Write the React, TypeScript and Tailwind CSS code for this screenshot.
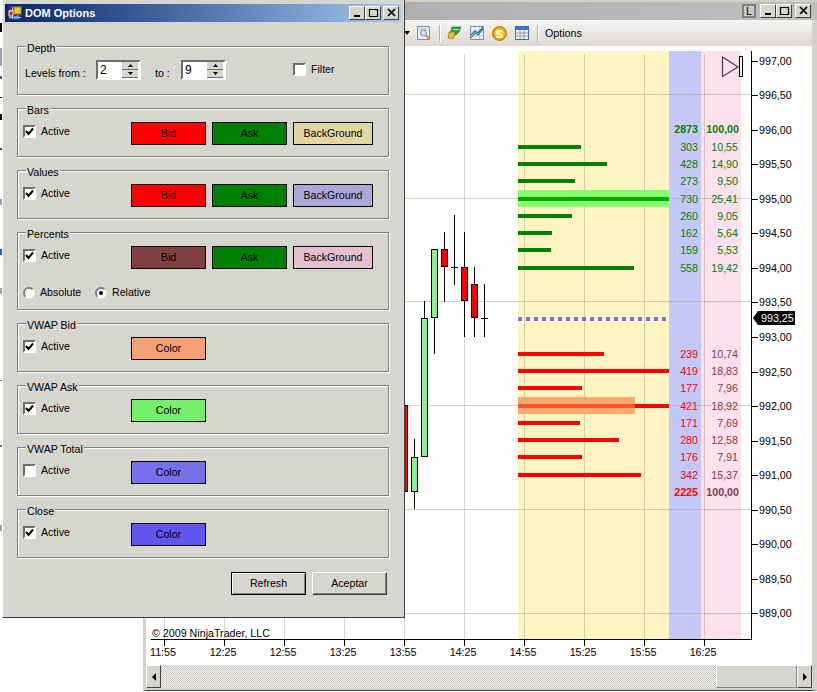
import type { ReactNode } from "react"

const askRows = [
  { y: 147, end: 581, value: "303", pct: "10,55" },
  { y: 164, end: 607, value: "428", pct: "14,90" },
  { y: 181, end: 575, value: "273", pct: "9,50" },
  { y: 199, end: 669, value: "730", pct: "25,41" },
  { y: 216, end: 572, value: "260", pct: "9,05" },
  { y: 233, end: 552, value: "162", pct: "5,64" },
  { y: 250, end: 551, value: "159", pct: "5,53" },
  { y: 268, end: 634, value: "558", pct: "19,42" },
]

const bidRows = [
  { y: 354, end: 604, value: "239", pct: "10,74" },
  { y: 371, end: 669, value: "419", pct: "18,83" },
  { y: 388, end: 582, value: "177", pct: "7,96" },
  { y: 406, end: 669, value: "421", pct: "18,92" },
  { y: 423, end: 580, value: "171", pct: "7,69" },
  { y: 440, end: 619, value: "280", pct: "12,58" },
  { y: 457, end: 582, value: "176", pct: "7,91" },
  { y: 475, end: 641, value: "342", pct: "15,37" },
]

const priceLabels = [
  { y: 61, text: "997,00" },
  { y: 95, text: "996,50" },
  { y: 130, text: "996,00" },
  { y: 164, text: "995,50" },
  { y: 199, text: "995,00" },
  { y: 233, text: "994,50" },
  { y: 268, text: "994,00" },
  { y: 302, text: "993,50" },
  { y: 337, text: "993,00" },
  { y: 372, text: "992,50" },
  { y: 406, text: "992,00" },
  { y: 441, text: "991,50" },
  { y: 475, text: "991,00" },
  { y: 510, text: "990,50" },
  { y: 544, text: "990,00" },
  { y: 579, text: "989,50" },
  { y: 613, text: "989,00" },
]

const timeLabels = [
  { x: 164, text: "11:55" },
  { x: 224, text: "12:25" },
  { x: 284, text: "12:55" },
  { x: 344, text: "13:25" },
  { x: 404, text: "13:55" },
  { x: 464, text: "14:25" },
  { x: 524, text: "14:55" },
  { x: 584, text: "15:25" },
  { x: 644, text: "15:55" },
  { x: 704, text: "16:25" },
]

const gridY = [95, 199, 302, 406, 510, 614]

const candles = [
  { x: 404, top: 405, bottom: 492, wickTop: 405, wickBottom: 492, fill: "#ff0000" },
  { x: 414, top: 457, bottom: 492, wickTop: 439, wickBottom: 509, fill: "#90ee90" },
  { x: 424, top: 318, bottom: 457, wickTop: 301, wickBottom: 457, fill: "#90ee90" },
  { x: 434, top: 249, bottom: 318, wickTop: 249, wickBottom: 354, fill: "#90ee90" },
  { x: 444, top: 249, bottom: 267, wickTop: 232, wickBottom: 302, fill: "#ff0000" },
  { x: 464, top: 267, bottom: 301, wickTop: 232, wickBottom: 337, fill: "#ff0000" },
  { x: 474, top: 284, bottom: 318, wickTop: 267, wickBottom: 337, fill: "#ff0000" },
]

const dojis = [
  { x: 454, mid: 267, top: 215, bottom: 285 },
  { x: 484, mid: 318, top: 284, bottom: 337 },
]

const behindDashes = [
  { top: 23, h: 9, color: "bg-black" },
  { top: 48, h: 18, color: "bg-gray-400" },
  { top: 76, h: 3, color: "bg-gray-600" },
  { top: 97, h: 1, color: "bg-black" },
  { top: 114, h: 6, color: "bg-black" },
  { top: 148, h: 2, color: "bg-gray-700" },
  { top: 199, h: 6, color: "bg-gray-400" },
  { top: 249, h: 6, color: "bg-blue-600" },
  { top: 288, h: 6, color: "bg-gray-400" },
  { top: 380, h: 1, color: "bg-gray-500" },
  { top: 445, h: 2, color: "bg-gray-500" },
  { top: 525, h: 6, color: "bg-gray-400" },
]

function Checkbox({ checked }: { checked?: boolean }) {
  return (
    <span className="w-[13px] h-[13px] shrink-0 bg-white border-2 border-t-[#6e6e6e] border-l-[#6e6e6e] border-r-white border-b-white flex items-center justify-center">
      {checked && (
        <svg width="9" height="9" viewBox="0 0 9 9">
          <path d="M1 4 L3.5 7 L8 1.5" fill="none" stroke="#000" strokeWidth="2" />
        </svg>
      )}
    </span>
  )
}

function Radio({ checked }: { checked?: boolean }) {
  return (
    <span className="w-3 h-3 shrink-0 rounded-full bg-white border-2 border-t-[#808080] border-l-[#808080] border-r-[#efefef] border-b-[#efefef] flex items-center justify-center">
      {checked && <span className="w-1 h-1 rounded-full bg-black" />}
    </span>
  )
}

function ColorButton({ label, color, wide }: { label: string; color: string; wide?: boolean }) {
  return (
    <div className={`${wide ? "w-[80px]" : "w-[75px]"} h-[23px] border border-black flex items-center justify-center pt-px ${color}`}>
      {label}
    </div>
  )
}

function Group({ title, className, children }: { title: string; className: string; children: ReactNode }) {
  return (
    <div className={`relative border border-[#808080] shadow-[1px_1px_0_#fff,inset_1px_1px_0_#fff] ${className}`}>
      <span className="absolute left-[8px] top-[-5px] px-px bg-[#d6d5ce] leading-[13px]">{title}</span>
      {children}
    </div>
  )
}

function ActiveRow({ checked, children }: { checked?: boolean; children: ReactNode }) {
  return (
    <div className="flex items-start pl-[5px] pt-[13px]">
      <div className="w-[108px] flex items-center gap-[5px] mt-[3px] leading-[13px]">
        <Checkbox checked={checked} />
        Active
      </div>
      <div className="flex gap-[6px]">{children}</div>
    </div>
  )
}

function Spinner({ value }: { value: number }) {
  return (
    <div className="w-[45px] h-[20px] bg-white border-2 border-t-[#6e6e6e] border-l-[#6e6e6e] border-r-white border-b-white flex items-center justify-between text-[12px]">
      <span className="pl-[2px]">{value}</span>
      <div className="w-[16px] h-full flex flex-col mr-[1px]">
        <div className="flex-1 bg-[#d6d5ce] border-b border-[#6e6e6e] flex items-center justify-center">
          <svg width="5" height="3" viewBox="0 0 5 3">
            <path d="M2.5 0 L5 3 H0 Z" fill="#000" />
          </svg>
        </div>
        <div className="flex-1 bg-[#d6d5ce] border-b border-[#6e6e6e] flex items-center justify-center">
          <svg width="5" height="3" viewBox="0 0 5 3">
            <path d="M0 0 H5 L2.5 3 Z" fill="#000" />
          </svg>
        </div>
      </div>
    </div>
  )
}

function WinButton({ kind, className }: { kind: "min" | "max" | "close"; className: string }) {
  return (
    <div className={`h-[14px] bg-[#d6d5ce] border border-t-white border-l-white border-r-[#404040] border-b-[#404040] flex items-center justify-center ${className}`}>
      <svg width="11" height="10" viewBox="0 0 11 10">
        {kind === "min" && <rect x="2" y="7" width="6" height="2" fill="#000" />}
        {kind === "max" && <path d="M1.5 1.5 H9.5 V8.5 H1.5 Z M1 1.5 H10" fill="none" stroke="#000" strokeWidth="1.2" />}
        {kind === "close" && <path d="M2 1 L9 8 M9 1 L2 8" fill="none" stroke="#000" strokeWidth="1.7" />}
      </svg>
    </div>
  )
}

function DialogIcon() {
  return (
    <svg width="14" height="14" viewBox="0 0 14 14" className="shrink-0">
      <rect width="14" height="14" fill="#1c3a78" />
      <path d="M1 4.5 H13 M1 11.5 H13 M4.5 1 V13 M10 9 V13" stroke="#b8c4dc" />
      <rect x="6" y="1" width="7" height="7" fill="#f4c430" stroke="#a87808" />
      <rect x="1" y="5" width="4" height="5" fill="#d82020" stroke="#e8e8e8" />
      <rect x="6" y="10" width="4" height="3" fill="#58a0e8" />
    </svg>
  )
}

function ToolbarIcons() {
  return (
    <>
      <svg width="14" height="15" viewBox="0 0 14 15" className="ml-[7px] shrink-0">
        <rect x="0.5" y="0.5" width="12" height="13" fill="#eaf0fa" stroke="#6f93c8" />
        <path d="M2 3 H11" stroke="#9db7dc" />
        <circle cx="6.5" cy="7" r="3" fill="#cfe2f6" stroke="#7a8aa0" />
        <path d="M9 9.5 L13 13.5" stroke="#e08a30" strokeWidth="2" />
      </svg>
      <div className="w-px h-[17px] bg-[#b4b0a8] ml-[8px] shadow-[1px_0_0_#fff]" />
      <svg width="15" height="14" viewBox="0 0 15 14" className="ml-[7px] shrink-0">
        <path d="M5 1 H14 L12 6 L9 9 H3 Z" fill="#2fa043" stroke="#146a24" strokeWidth="0.6" />
        <path d="M2 6 H8 L7 12 Q4 14 1 12 Z" fill="#eab82a" stroke="#8d6a10" strokeWidth="0.6" />
        <path d="M6 3.5 H12" stroke="#a8eab4" />
      </svg>
      <svg width="14" height="14" viewBox="0 0 14 14" className="ml-[8px] shrink-0">
        <rect x="0.5" y="0.5" width="13" height="13" fill="#f2f2fb" stroke="#8a8ab0" />
        <path d="M5 1 V13 M9.5 1 V13 M1 5 H13 M1 9.5 H13" stroke="#c8c8e0" />
        <path d="M1 12 L5 7 L8 9 L13 3" fill="none" stroke="#1f9e4a" strokeWidth="1.2" />
        <path d="M1 9 L5 5 L8 7 L13 1" fill="none" stroke="#2a62c8" strokeWidth="1.2" />
      </svg>
      <svg width="15" height="15" viewBox="0 0 15 15" className="ml-[8px] shrink-0">
        <circle cx="7.5" cy="7.5" r="7" fill="#e3a008" stroke="#b87f08" />
        <circle cx="7.5" cy="7.5" r="5" fill="#f8c82c" />
        <text x="7.5" y="11.5" textAnchor="middle" fontSize="11" fontWeight="700" fill="#fff">
          S
        </text>
      </svg>
      <svg width="14" height="14" viewBox="0 0 14 14" className="ml-[8px] shrink-0">
        <rect x="0.5" y="0.5" width="13" height="13" fill="#f6f3e2" stroke="#3b6cb0" />
        <rect x="1" y="1" width="12" height="3" fill="#3b78c8" />
        <path d="M1 7 H13 M1 10 H13 M5 4 V13 M9 4 V13" stroke="#8aa0c0" />
      </svg>
      <div className="w-px h-[17px] bg-[#b4b0a8] ml-[8px] shadow-[1px_0_0_#fff]" />
      <span className="ml-[7px]">Options</span>
    </>
  )
}

function ChartCanvas() {
  const dots = Array.from({ length: 19 }, (_, i) => 518 + i * 8)

  return (
    <svg width="666" height="619" viewBox="146 46 666 619" className="block shrink-0 bg-white">
      <rect x="518" y="51" width="151" height="588" fill="#fff5c3" />
      <rect x="669" y="51" width="32" height="588" fill="#c4c8f8" />
      <rect x="701" y="51" width="40" height="588" fill="#fddfee" />

      {timeLabels.map((t) => (
        <path key={t.x} d={`M${t.x + 0.5} 54 V639`} stroke="#a09880" strokeOpacity="0.42" />
      ))}
      {gridY.map((y) => (
        <path key={y} d={`M146 ${y - 0.5} H751`} stroke="#a09880" strokeOpacity="0.42" />
      ))}

      <rect x="518" y="190" width="151" height="17" fill="#87ff6e" />
      <rect x="518" y="397" width="117" height="17" fill="#ffa96b" />

      {askRows.map((r) => (
        <rect
          key={r.y}
          x="518"
          y={r.y - 2}
          width={r.end - 518}
          height="4"
          fill={r.value === "730" ? "#00a800" : "#008000"}
        />
      ))}
      {bidRows.map((r) => (
        <rect key={r.y} x="518" y={r.y - 2} width={r.end - 518} height="4" fill="#ff0000" />
      ))}
      <rect x="518" y="404" width="117" height="4" fill="#ff5030" />
      {dots.map((x) => (
        <rect key={x} x={x} y="317" width="4" height="4" fill="#7b72e6" />
      ))}

      {candles.map((c) => (
        <g key={c.x}>
          <path d={`M${c.x + 0.5} ${c.wickTop} V${c.wickBottom}`} stroke="#000" />
          <rect x={c.x - 2.5} y={c.top + 0.5} width="6" height={c.bottom - c.top - 1} fill={c.fill} stroke="#000" />
        </g>
      ))}
      {dojis.map((d) => (
        <path key={d.x} d={`M${d.x + 0.5} ${d.top} V${d.bottom} M${d.x - 3} ${d.mid + 0.5} H${d.x + 4}`} stroke="#000" />
      ))}

      <path d="M722.5 57 L738 67 L722.5 76.5 Z" fill="none" stroke="#4a3a50" strokeWidth="1.2" />
      <rect x="739.5" y="56.5" width="3" height="20" fill="#fff" stroke="#000" />

      <g textAnchor="end" fill="#008000">
        <text x="698" y="133" fontWeight="700">2873</text>
        <text x="739" y="133" fontWeight="700">100,00</text>
        {askRows.map((r) => (
          <g key={r.y}>
            <text x="698" y={r.y + 4}>{r.value}</text>
            <text x="738" y={r.y + 4}>{r.pct}</text>
          </g>
        ))}
      </g>
      <g textAnchor="end">
        {bidRows.map((r) => (
          <g key={r.y}>
            <text x="698" y={r.y + 4} fill="#ff0000">{r.value}</text>
            <text x="738" y={r.y + 4} fill="#804048">{r.pct}</text>
          </g>
        ))}
        <text x="698" y="496" fontWeight="700" fill="#ff0000">2225</text>
        <text x="739" y="496" fontWeight="700" fill="#804048">100,00</text>
      </g>

      <path d="M751.5 51 V640 M151 639.5 H752" stroke="#000" fill="none" />
      {priceLabels.map((p) => (
        <g key={p.y}>
          <path d={`M752 ${p.y + 0.5} H758`} stroke="#000" />
          <text x="759" y={p.y + 4}>{p.text}</text>
        </g>
      ))}
      {timeLabels.map((t) => (
        <g key={t.x}>
          <path d={`M${t.x + 0.5} 640 V646`} stroke="#000" />
          <text x={t.x - 1} y="656" textAnchor="middle">{t.text}</text>
        </g>
      ))}

      <path d="M753 318 L758 311 H795 V325 H758 Z" fill="#000" />
      <text x="761" y="322" fill="#fff">993,25</text>

      <text x="152" y="637">© 2009 NinjaTrader, LLC</text>
    </svg>
  )
}

function ChartWindow() {
  return (
    <div className="absolute left-[143px] top-0 w-[674px] h-[691px] bg-[#d4d0c8] border-l-[3px] border-r-[5px] border-b border-b-[#404040] border-l-[#d4d0c8] border-r-[#d4d0c8] pt-[2px] flex flex-col">
      <div className="h-[18px] shrink-0 -mr-[5px] pr-[6px] bg-gradient-to-r from-[#a6a6a6] to-[#bebebe] flex items-center justify-end">
        <div className="w-[14px] h-[14px] mr-[4px] bg-[#c8c8c8] border-2 border-[#808080] flex items-center justify-center text-[11px] leading-none">
          L
        </div>
        <WinButton kind="min" className="w-[16px]" />
        <WinButton kind="max" className="w-[16px]" />
        <WinButton kind="close" className="w-[16px] ml-[3px]" />
      </div>
      <div className="h-[26px] shrink-0 bg-gradient-to-b from-[#f7f5f2] to-[#dcd8d1] flex items-center pl-[258px]">
        <span className="w-0 h-0 shrink-0 border-x-[3px] border-x-transparent border-t-[4px] border-t-black" />
        <ToolbarIcons />
      </div>
      <ChartCanvas />
      <div className="h-[23px] shrink-0 flex bg-[conic-gradient(#c8c5bc_25%,#f6f5f1_0_50%,#c8c5bc_0_75%,#f6f5f1_0)] bg-[length:2px_2px]">
        <div className="w-[15px] bg-[#d6d5ce] border border-t-white border-l-white border-r-[#404040] border-b-[#404040] flex items-center justify-center">
          <span className="w-0 h-0 border-y-[4px] border-y-transparent border-r-[4px] border-r-black" />
        </div>
        <div className="flex-1" />
        <div className="w-[81px] bg-[#d6d5ce] border border-t-white border-l-white border-r-[#808080] border-b-[#808080]" />
        <div className="w-[15px] bg-[#d6d5ce] border border-t-white border-l-white border-r-[#404040] border-b-[#404040] flex items-center justify-center">
          <span className="w-0 h-0 border-y-[4px] border-y-transparent border-l-[4px] border-l-black" />
        </div>
      </div>
    </div>
  )
}

function DomOptions() {
  return (
    <div className="absolute left-[2px] top-0 w-[403px] h-[618px] bg-[#d6d5ce] border-l border-l-white border-r border-r-[#404040] border-b border-b-[#404040] pt-[4px] text-[10.6px] text-black">
      <div className="h-[18px] ml-[2px] mr-[3px] bg-gradient-to-r from-[#0a246a] to-[#a6caf0] flex items-center pl-[3px] pr-[2px]">
        <DialogIcon />
        <span className="ml-[3px] text-[11px] font-bold text-white">DOM Options</span>
        <div className="ml-auto flex items-center">
          <WinButton kind="min" className="w-[16px]" />
          <WinButton kind="max" className="w-[16px]" />
          <WinButton kind="close" className="w-[16px] ml-[2px]" />
        </div>
      </div>

      <div className="ml-[14px] w-[372px] mt-[24px] flex flex-col gap-[13px]">
        <Group title="Depth" className="h-[49px]">
          <div className="flex items-start pl-[7px] pt-[13px]">
            <span className="w-[71px] mt-[7px] leading-[13px]">Levels from :</span>
            <Spinner value={2} />
            <span className="w-[26px] ml-[14px] mt-[7px] leading-[13px]">to :</span>
            <Spinner value={9} />
            <div className="ml-[67px] mt-[3px] flex items-center gap-[5px] leading-[13px]">
              <Checkbox />
              Filter
            </div>
          </div>
        </Group>

        <Group title="Bars" className="h-[49px]">
          <ActiveRow checked>
            <ColorButton label="Bid" color="bg-[#ff0000]" />
            <ColorButton label="Ask" color="bg-[#008000]" />
            <ColorButton label="BackGround" color="bg-[#e2d7a2]" wide />
          </ActiveRow>
        </Group>

        <Group title="Values" className="h-[49px]">
          <ActiveRow checked>
            <ColorButton label="Bid" color="bg-[#ff0000]" />
            <ColorButton label="Ask" color="bg-[#008000]" />
            <ColorButton label="BackGround" color="bg-[#aaa8da]" wide />
          </ActiveRow>
        </Group>

        <Group title="Percents" className="h-[78px]">
          <ActiveRow checked>
            <ColorButton label="Bid" color="bg-[#804040]" />
            <ColorButton label="Ask" color="bg-[#008000]" />
            <ColorButton label="BackGround" color="bg-[#e3bfd0]" wide />
          </ActiveRow>
          <div className="flex items-center pl-[5px] mt-[17px] leading-[13px]">
            <Radio />
            <span className="ml-[5px] w-[55px]">Absolute</span>
            <Radio checked />
            <span className="ml-[5px]">Relative</span>
          </div>
        </Group>

        <Group title="VWAP Bid" className="h-[49px]">
          <ActiveRow checked>
            <ColorButton label="Color" color="bg-[#f6a077]" />
          </ActiveRow>
        </Group>

        <Group title="VWAP Ask" className="h-[49px]">
          <ActiveRow checked>
            <ColorButton label="Color" color="bg-[#75ef6c]" />
          </ActiveRow>
        </Group>

        <Group title="VWAP Total" className="h-[49px]">
          <ActiveRow>
            <ColorButton label="Color" color="bg-[#7570ec]" />
          </ActiveRow>
        </Group>

        <Group title="Close" className="h-[49px]">
          <ActiveRow checked>
            <ColorButton label="Color" color="bg-[#6058ee]" />
          </ActiveRow>
        </Group>
      </div>

      <div className="ml-[228px] w-[156px] mt-[14px] flex gap-[6px]">
        <div className="w-[75px] h-[23px] border border-black shadow-[inset_1px_1px_0_#fff,inset_-1px_-1px_0_#808080] flex items-center justify-center">
          Refresh
        </div>
        <div className="w-[75px] h-[23px] border border-t-white border-l-white border-r-[#404040] border-b-[#404040] shadow-[inset_-1px_-1px_0_#808080] flex items-center justify-center">
          Aceptar
        </div>
      </div>
    </div>
  )
}

export default function App() {
  return (
    <div className="relative w-[817px] h-[692px] bg-white overflow-hidden text-[10.7px] text-black font-['Liberation_Sans',Arial,sans-serif]">
      <ChartWindow />
      {behindDashes.map((d) => (
        <div key={d.top} className={`absolute left-0 w-[2px] ${d.color}`} style={{ top: d.top, height: d.h }} />
      ))}
      <DomOptions />
    </div>
  )
}
